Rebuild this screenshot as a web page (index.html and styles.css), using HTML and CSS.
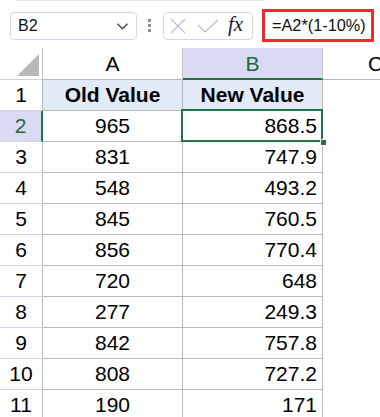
FILE: index.html
```html
<!DOCTYPE html>
<html>
<head>
<meta charset="utf-8">
<link rel="stylesheet" href="styles.css">
</head>
<body>
<div class="toolbar">
  <div class="namebox">
    <span class="ref">B2</span>
    <svg class="chev" width="11" height="7" viewBox="0 0 11 7"><path d="M0.5 0.8 L5.5 5.8 L10.5 0.8" fill="none" stroke="#3f3f5a" stroke-width="1.3"/></svg>
  </div>
  <div class="kebab"><i></i><i></i><i></i></div>
  <div class="fnbox">
    <svg class="ico-x" width="16" height="16" viewBox="0 0 16 16"><path d="M1 1 L15 15 M15 1 L1 15" fill="none" stroke="#bcbcd0" stroke-width="1.2"/></svg>
    <svg class="ico-ok" width="22" height="14" viewBox="0 0 22 14"><path d="M1 6 L8 13 L21 1" fill="none" stroke="#bcbcd0" stroke-width="1.2"/></svg>
    <span class="fx">fx</span>
  </div>
  <div class="formula">=A2*(1-10%)</div>
</div>
<div class="sheet">
  <div class="grid">
    <div class="corner"><div class="tri"></div></div>
    <div class="ch">A</div>
    <div class="ch ch-sel">B</div>
    <div class="ch ch-c">C</div>

    <div class="rh">1</div>
    <div class="c hl ctr bold">Old Value</div>
    <div class="c hl ctr bold">New Value</div>
    <div class="cc"></div>

    <div class="rh rh-sel">2</div>
    <div class="c ctr">965</div>
    <div class="c num sel">868.5</div>
    <div class="cc"></div>

    <div class="rh">3</div>
    <div class="c ctr">831</div>
    <div class="c num">747.9</div>
    <div class="cc"></div>

    <div class="rh">4</div>
    <div class="c ctr">548</div>
    <div class="c num">493.2</div>
    <div class="cc"></div>

    <div class="rh">5</div>
    <div class="c ctr">845</div>
    <div class="c num">760.5</div>
    <div class="cc"></div>

    <div class="rh">6</div>
    <div class="c ctr">856</div>
    <div class="c num">770.4</div>
    <div class="cc"></div>

    <div class="rh">7</div>
    <div class="c ctr">720</div>
    <div class="c num">648</div>
    <div class="cc"></div>

    <div class="rh">8</div>
    <div class="c ctr">277</div>
    <div class="c num">249.3</div>
    <div class="cc"></div>

    <div class="rh">9</div>
    <div class="c ctr">842</div>
    <div class="c num">757.8</div>
    <div class="cc"></div>

    <div class="rh">10</div>
    <div class="c ctr">808</div>
    <div class="c num">727.2</div>
    <div class="cc"></div>

    <div class="rh">11</div>
    <div class="c ctr">190</div>
    <div class="c num">171</div>
    <div class="cc"></div>
  </div>
</div>
</body>
</html>
```

FILE: styles.css
```css
* { box-sizing: border-box; }
html, body {
  margin: 0;
  padding: 0;
  background: #fff;
  width: 380px;
  height: 417px;
  overflow: hidden;
  font-family: "Liberation Sans", Arial, sans-serif;
  color: #000;
}

.toolbar {
  height: 48px;
  display: flex;
  align-items: center;
  padding: 9px 0 6px 10px;
  background: linear-gradient(#e6e6f3, #e6e6f3) no-repeat 15px 0 / 250px 1px;
}

.namebox {
  width: 127px;
  height: 28px;
  border: 1px solid #d6d6e8;
  border-radius: 4px;
  display: flex;
  align-items: center;
  padding-left: 7px;
  padding-right: 8px;
  justify-content: space-between;
}
.ref {
  font-size: 16px;
  color: #111;
}
.chev { margin-top: 1px; }

.kebab {
  margin-left: 11px;
  width: 3px;
  display: flex;
  flex-direction: column;
  gap: 2px;
}
.kebab i {
  display: block;
  width: 3px;
  height: 3px;
  background: #8d8d9a;
}

.fnbox {
  margin-left: 12px;
  width: 90px;
  height: 28px;
  border: 1px solid #d6d6e8;
  border-radius: 4px;
  display: flex;
  align-items: center;
  padding-left: 6px;
}
.ico-ok { margin-left: 11px; margin-top: 1px; }
.fx {
  margin-left: 9px;
  font-family: "Liberation Serif", "Times New Roman", serif;
  font-style: italic;
  font-size: 21px;
  color: #1a1a2a;
  margin-top: -3px;
}

.formula {
  margin-left: 9px;
  width: 112px;
  height: 33px;
  border: 3px solid #ee2a2a;
  display: flex;
  align-items: center;
  padding-left: 7px;
  font-size: 16.3px;
  color: #111;
  white-space: nowrap;
}

.sheet {
  width: 380px;
  overflow: hidden;
}
.grid {
  display: grid;
  grid-template-columns: 43px 140px 140px 105px;
  grid-template-rows: 32px repeat(11, 31px);
  width: 428px;
  font-size: 21px;
}

.corner {
  border-right: 1px solid #c4c4c4;
  border-bottom: 1px solid #cfcfdc;
  display: flex;
  justify-content: flex-end;
  align-items: flex-end;
  padding: 0 3px 3px 0;
}
.tri {
  width: 22px;
  height: 22px;
  background: #b8b8b8;
  clip-path: polygon(100% 0, 100% 100%, 0 100%);
}

.ch {
  border-right: 1px solid #c4c4c4;
  border-bottom: 1px solid #b8b8b8;
  display: flex;
  align-items: center;
  justify-content: center;
  padding-top: 1px;
}
.ch-sel {
  background: #dadaf3;
  color: #1e6b3e;
  border-bottom: 2px solid #217346;
}
.ch-c {
  border-right: none;
}

.rh {
  border-right: 1px solid #b8b8b8;
  border-bottom: 1px solid #d4d4e6;
  display: flex;
  align-items: center;
  justify-content: center;
}
.rh-sel {
  background: #dadaf3;
  color: #1e6b3e;
  border-right: 2px solid #217346;
}

.c {
  border-right: 1px solid #b8b8b8;
  border-bottom: 1px solid #b8b8b8;
  display: flex;
  align-items: center;
  white-space: nowrap;
}
.ctr { justify-content: center; }
.num { justify-content: flex-end; padding-right: 5px; }
.bold { font-weight: bold; }
.hl { background: #e2eaf8; }

.sel { position: relative; }
.sel::before {
  content: "";
  position: absolute;
  top: -2px;
  left: -2px;
  right: -1px;
  bottom: -1px;
  border: 2px solid #217346;
}
.sel::after {
  content: "";
  position: absolute;
  right: -4px;
  bottom: -4px;
  width: 5px;
  height: 5px;
  background: #217346;
  outline: 1px solid #fff;
}
```
